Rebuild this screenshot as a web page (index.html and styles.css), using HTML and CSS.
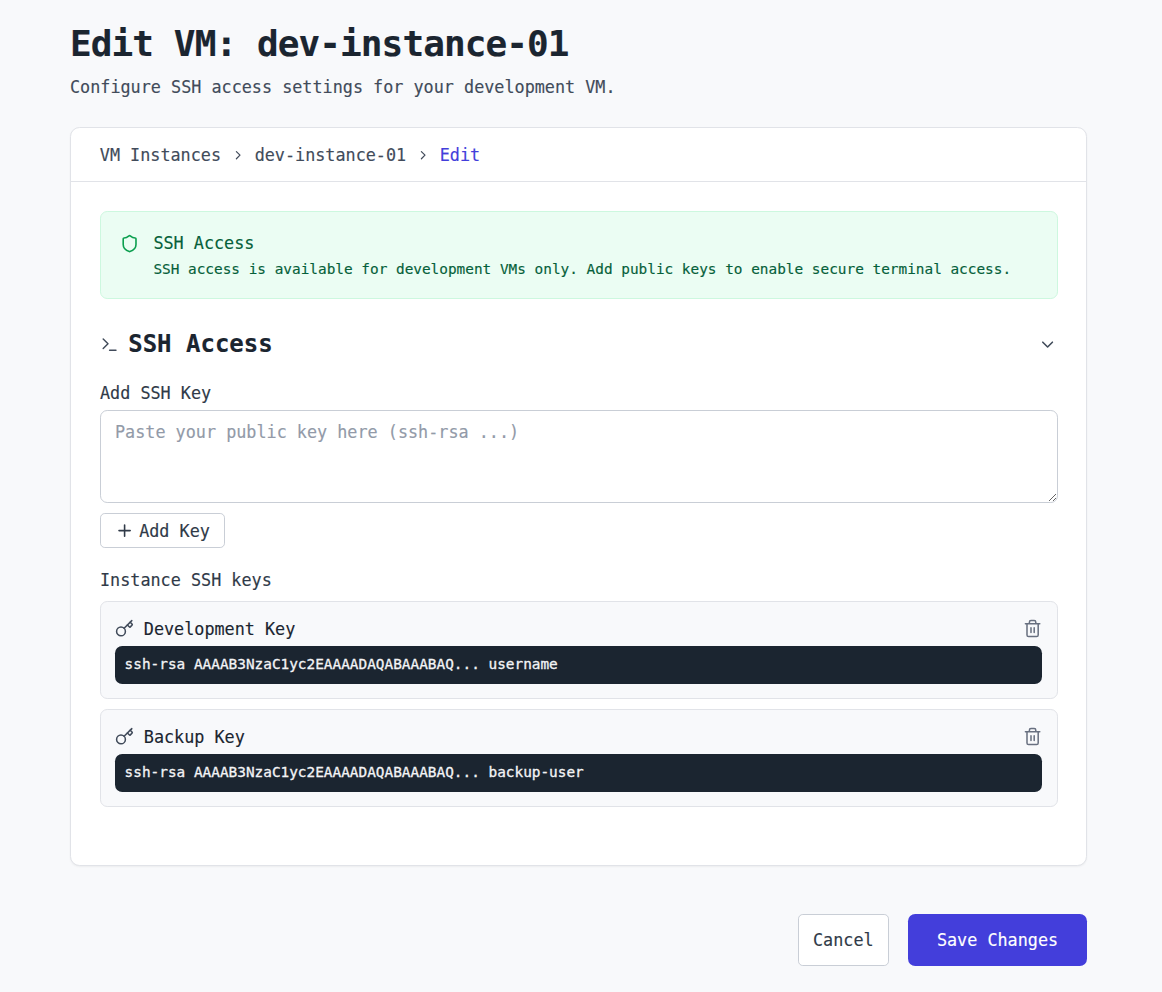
FILE: index.html
```html
<!DOCTYPE html>
<html lang="en">
<head>
<meta charset="utf-8">
<title>Edit VM: dev-instance-01</title>
<link rel="stylesheet" href="styles.css">
</head>
<body>
<main class="page">
  <h1 class="title">Edit VM: dev-instance-01</h1>
  <p class="subtitle">Configure SSH access settings for your development VM.</p>
  <section class="panel">
    <nav class="crumbs">
      <span>VM Instances</span>
      <svg class="sep" viewBox="0 0 24 24"><path d="m9 18 6-6-6-6"/></svg>
      <span>dev-instance-01</span>
      <svg class="sep" viewBox="0 0 24 24"><path d="m9 18 6-6-6-6"/></svg>
      <span class="current">Edit</span>
    </nav>
    <div class="content">
      <div class="notice">
        <svg class="icon" viewBox="0 0 24 24"><path d="M20 13c0 5-3.5 7.5-7.66 8.95a1 1 0 0 1-.67-.01C7.5 20.5 4 18 4 13V6a1 1 0 0 1 1-1c2 0 4.500-1.200 6.240-2.720a1.170 1.170 0 0 1 1.520 0C14.510 3.810 17 5 19 5a1 1 0 0 1 1 1z"/></svg>
        <div>
          <p class="notice-title">SSH Access</p>
          <p class="notice-text">SSH access is available for development VMs only. Add public keys to enable secure terminal access.</p>
        </div>
      </div>
      <div class="section-head">
        <svg class="icon thin" viewBox="0 0 24 24"><path d="m4 17 6-6-6-6"/><path d="M12 19h8"/></svg>
        <h2>SSH Access</h2>
        <svg class="icon chevron" viewBox="0 0 24 24"><path d="m6 9 6 6 6-6"/></svg>
      </div>
      <label class="label" for="key">Add SSH Key</label>
      <textarea id="key" class="key-input" placeholder="Paste your public key here (ssh-rsa ...)"></textarea>
      <button class="btn add"><svg class="icon" viewBox="0 0 24 24"><path d="M5 12h14M12 5v14"/></svg>Add Key</button>
      <p class="label list-label">Instance SSH keys</p>
      <div class="keys">
        <article class="key">
          <div class="key-head">
            <svg class="icon" viewBox="0 0 24 24"><path d="m15.500 7.500 2.300 2.300a1 1 0 0 0 1.400 0l2.100-2.100a1 1 0 0 0 0-1.400L19 4"/><path d="m21 2-9.600 9.600"/><circle cx="7.500" cy="15.500" r="5.500"/></svg>
            <span>Development Key</span>
            <svg class="icon trash" viewBox="0 0 24 24"><path d="M3 6h18M19 6v14a2 2 0 0 1-2 2H7a2 2 0 0 1-2-2V6M8 6V4a2 2 0 0 1 2-2h4a2 2 0 0 1 2 2v2M10 11v6M14 11v6"/></svg>
          </div>
          <code class="code">ssh-rsa AAAAB3NzaC1yc2EAAAADAQABAAABAQ... username</code>
        </article>
        <article class="key">
          <div class="key-head">
            <svg class="icon" viewBox="0 0 24 24"><path d="m15.500 7.500 2.300 2.300a1 1 0 0 0 1.400 0l2.100-2.100a1 1 0 0 0 0-1.400L19 4"/><path d="m21 2-9.600 9.600"/><circle cx="7.500" cy="15.500" r="5.500"/></svg>
            <span>Backup Key</span>
            <svg class="icon trash" viewBox="0 0 24 24"><path d="M3 6h18M19 6v14a2 2 0 0 1-2 2H7a2 2 0 0 1-2-2V6M8 6V4a2 2 0 0 1 2-2h4a2 2 0 0 1 2 2v2M10 11v6M14 11v6"/></svg>
          </div>
          <code class="code">ssh-rsa AAAAB3NzaC1yc2EAAAADAQABAAABAQ... backup-user</code>
        </article>
      </div>
    </div>
  </section>
  <div class="actions">
    <button class="btn cancel">Cancel</button>
    <button class="btn save">Save Changes</button>
  </div>
</main>
</body>
</html>
```
FILE: styles.css
```css
html { font-size: 19.2px; }
* { box-sizing: border-box; }
body, h1, h2, p { margin: 0; }
body {
  background: #f8f9fb;
  color: #1b2530;
  font-family: "DejaVu Sans Mono", monospace;
  font-size: 16.8px;
  line-height: 24px;
  -webkit-text-stroke: 0.15px currentColor;
}
.page { width: 1017px; margin-left: 70px; padding-top: 22px; }
.title { font-size: 36px; line-height: 43.2px; letter-spacing: -0.9px; font-weight: 700; }
.subtitle { margin-top: 9.8px; color: #414b5a; }
.panel {
  margin-top: 28px;
  background: #fff;
  border: 1px solid #e1e3e8;
  border-radius: 9.6px;
  box-shadow: 0 1px 2px rgba(0, 0, 0, .05);
}
.crumbs {
  display: flex;
  align-items: center;
  gap: 9.6px;
  height: 54px;
  padding: 1px 28.8px 0;
  border-bottom: 1px solid #e1e3e8;
  color: #414b5a;
}
.current { color: #433edb; }
.sep, .icon { fill: none; stroke: currentColor; stroke-width: 2; stroke-linecap: round; stroke-linejoin: round; flex: none; }
.sep { width: 14.4px; height: 14.4px; }
.icon { width: 19.2px; height: 19.2px; stroke-width: 2; }
.icon.thin { stroke-width: 1.8; }
.content { padding: 29px 28px 58px 29px; }
.notice {
  display: flex;
  gap: 14px;
  height: 88px;
  padding: 19.2px;
  background: #ebfdf3;
  border: 1px solid #cdf8df;
  border-radius: 7.2px;
  color: #05603a;
}
.notice .icon { color: #0c9f4f; margin-top: 3px; }
.notice-text { margin-top: 4.8px; font-size: 14.4px; line-height: 19.2px; white-space: nowrap; }
.section-head { display: flex; align-items: center; gap: 9px; margin-top: 29px; height: 33px; padding-right: 1px; color: #414b5a; }
.section-head h2 { font-size: 24px; line-height: 33.6px; color: #1b2530; }
.chevron { margin-left: auto; }
.label { display: block; margin-top: 20px; color: #303a48; }
.key-input {
  display: block;
  width: 100%;
  height: 93px;
  margin-top: 5px;
  padding: 9px 14px;
  border: 1px solid #c9ced6;
  border-radius: 7.2px;
  background: #fff;
  font: inherit;
  resize: vertical;
}
.key-input::placeholder { color: #929aa8; opacity: 1; }
.btn {
  display: flex;
  align-items: center;
  justify-content: center;
  font: inherit;
  -webkit-text-stroke: inherit;
  padding: 0;
  border: 1px solid #c9ced6;
  border-radius: 4.8px;
  background: #fff;
  color: #303a48;
}
.add { width: 125px; height: 35px; margin-top: 10px; gap: 4.8px; }
.list-label { margin-top: 20px; }
.keys { display: grid; gap: 10px; margin-top: 9px; }
.key { height: 98px; padding: 15px 15px 14px 14px; border: 1px solid #e1e3e8; border-radius: 7.2px; background: #f8f9fb; }
.key-head { display: flex; align-items: center; gap: 9.6px; height: 24px; }
.key-head .icon { color: #414b5a; stroke-width: 1.9; }
.key-head .trash { margin-left: auto; color: #687080; }
.code {
  display: block;
  height: 38.4px;
  margin-top: 4.8px;
  padding: 9px 9.6px;
  border-radius: 7.2px;
  background: #1b2530;
  color: #f3f4f6;
  font: 14.4px/19.2px "DejaVu Sans Mono", monospace;
  -webkit-text-stroke: 0.3px currentColor;
}
.actions { display: flex; justify-content: flex-end; gap: 19.2px; margin-top: 48px; }
.cancel { width: 91px; height: 52px; }
.save { width: 179px; height: 52px; border: 0; border-radius: 7.2px; background: #433edb; color: #fff; }
```
